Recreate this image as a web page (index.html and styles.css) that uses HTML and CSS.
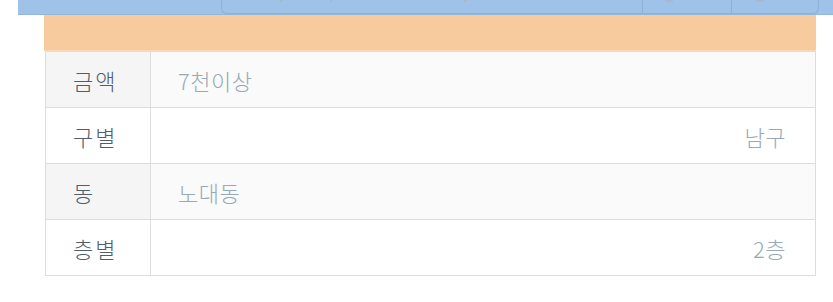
FILE: index.html
```html
<!DOCTYPE html>
<html lang="ko">
<head>
<meta charset="utf-8">
<link rel="stylesheet" href="styles.css">
</head>
<body>
<div class="topbar">
  <div class="group">
    <div class="seg seg-main"><span class="tick t1"></span><span class="tick t2"></span><span class="tick t3"></span></div>
    <div class="seg seg-btn"><span class="tick t4"></span></div>
    <div class="seg seg-btn last"><span class="tick t5"></span></div>
  </div>
</div>
<div class="content">
  <div class="panel-head"></div>
  <table class="info">
    <tr class="odd"><th>금액</th><td>7천이상</td></tr>
    <tr><th>구별</th><td class="right">남구</td></tr>
    <tr class="odd"><th>동</th><td>노대동</td></tr>
    <tr><th>층별</th><td class="right">2층</td></tr>
  </table>
</div>
</body>
</html>
```
FILE: styles.css
```css
html, body {
  margin: 0;
  padding: 0;
  background: #ffffff;
  font-family: "Noto Sans CJK KR", "Noto Sans", sans-serif;
}
.topbar {
  margin-left: 18px;
  height: 14px;
  background: #9fc3e8;
  border-bottom: 1px solid #93b6dc;
  display: flex;
  padding-left: 203px;
  padding-right: 14px;
}
.group {
  flex: 1;
  display: flex;
  height: 14px;
  border: 1px solid #8fb0d4;
  border-top: none;
  border-radius: 0 0 6px 6px;
  box-sizing: border-box;
}
.seg {
  position: relative;
  height: 100%;
}
.seg-main { flex: 1; }
.seg-btn { width: 88px; border-left: 1px solid #8fb0d4; }
.seg-btn.last { width: 86px; }
.tick {
  position: absolute;
  top: 0;
  height: 2px;
  background: #a9b9cc;
}
.t1 { left: 58px; width: 3px; }
.t2 { left: 108px; width: 2px; }
.t3 { left: 242px; width: 3px; }
.t4 { left: 22px; width: 8px; }
.t5 { left: 24px; width: 8px; }
.content {
  margin: 0 17px 0 44px;
}
.panel-head {
  height: 35px;
  background: #f8cb9e;
  border-bottom: 1px solid #fbd9b6;
}
.info {
  border-collapse: collapse;
  margin-left: 1px;
  width: calc(100% - 1px);
}
.info th, .info td {
  border: 1px solid #dddddd;
  height: 55px;
  padding: 0;
  font-size: 22px;
  font-weight: 300;
  letter-spacing: 0.5px;
}
.info th {
  width: 77px;
  text-align: left;
  padding-left: 27px;
  letter-spacing: 2px;
  color: #4f5e69;
  background: #ffffff;
}
.info td {
  text-align: left;
  padding: 0 29px 0 27px;
  color: #97a9b4;
  background: #ffffff;
}
.info td.right { text-align: right; }
.info tr.odd th { background: #f5f5f5; }
.info tr.odd td { background: #fafafa; }
```
